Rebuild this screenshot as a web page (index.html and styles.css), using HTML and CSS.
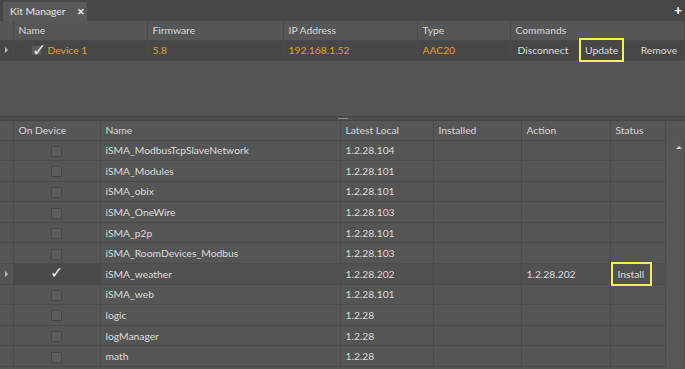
FILE: index.html
```html
<!DOCTYPE html>
<html lang="en">
<head>
  <meta charset="UTF-8" />
  <title>Kit Manager</title>
  <link rel="stylesheet" href="styles.css">
</head>
<body>

  <div class="tab-bar">
    <div class="tab">Kit Manager <span class="tab-close">✕</span></div>
    <span class="tab-add">+</span>
  </div>

  <div class="panel top-panel">
    <table class="grid devices">
      <colgroup>
        <col style="width:13px"><col style="width:134px"><col style="width:136px">
        <col style="width:134px"><col style="width:93px"><col>
      </colgroup>
      <thead>
        <tr><th></th><th>Name</th><th>Firmware</th><th>IP Address</th><th>Type</th><th>Commands</th></tr>
      </thead>
      <tbody>
        <tr class="selected">
          <td class="row-head"><span class="arrow"></span></td>
          <td class="orange"><span class="box checked">✓</span>Device 1</td>
          <td class="orange">5.8</td>
          <td class="orange">192.168.1.52</td>
          <td class="orange">AAC20</td>
          <td class="commands">
            <span>Disconnect</span>
            <span class="mark">Update</span>
            <span class="remove">Remove</span>
          </td>
        </tr>
      </tbody>
    </table>
  </div>

  <div class="splitter"><span class="grip"></span></div>

  <div class="panel bottom-panel">
    <table class="grid kits">
      <colgroup>
        <col style="width:13px"><col style="width:87px"><col style="width:240px">
        <col style="width:93px"><col style="width:88px"><col style="width:89px">
        <col style="width:55px"><col>
      </colgroup>
      <thead>
        <tr><th></th><th>On Device</th><th>Name</th><th>Latest Local</th><th>Installed</th><th>Action</th><th>Status</th><th class="scroll-col"></th></tr>
      </thead>
      <tbody>
        <tr><td class="row-head"></td><td class="center"><span class="box"></span></td><td>iSMA_ModbusTcpSlaveNetwork</td><td>1.2.28.104</td><td></td><td></td><td></td><td class="scroll-col" rowspan="11"><span class="scroll-up"></span></td></tr>
        <tr><td class="row-head"></td><td class="center"><span class="box"></span></td><td>iSMA_Modules</td><td>1.2.28.101</td><td></td><td></td><td></td></tr>
        <tr><td class="row-head"></td><td class="center"><span class="box"></span></td><td>iSMA_obix</td><td>1.2.28.101</td><td></td><td></td><td></td></tr>
        <tr><td class="row-head"></td><td class="center"><span class="box"></span></td><td>iSMA_OneWire</td><td>1.2.28.103</td><td></td><td></td><td></td></tr>
        <tr><td class="row-head"></td><td class="center"><span class="box"></span></td><td>iSMA_p2p</td><td>1.2.28.101</td><td></td><td></td><td></td></tr>
        <tr><td class="row-head"></td><td class="center"><span class="box"></span></td><td>iSMA_RoomDevices_Modbus</td><td>1.2.28.103</td><td></td><td></td><td></td></tr>
        <tr class="selected"><td class="row-head"><span class="arrow"></span></td><td class="center on"><span class="tick">✓</span></td><td>iSMA_weather</td><td>1.2.28.202</td><td></td><td>1.2.28.202</td><td class="status"><span class="mark">Install</span></td></tr>
        <tr><td class="row-head"></td><td class="center"><span class="box"></span></td><td>iSMA_web</td><td>1.2.28.101</td><td></td><td></td><td></td></tr>
        <tr><td class="row-head"></td><td class="center"><span class="box"></span></td><td>logic</td><td>1.2.28</td><td></td><td></td><td></td></tr>
        <tr><td class="row-head"></td><td class="center"><span class="box"></span></td><td>logManager</td><td>1.2.28</td><td></td><td></td><td></td></tr>
        <tr><td class="row-head"></td><td class="center"><span class="box"></span></td><td>math</td><td>1.2.28</td><td></td><td></td><td></td></tr>
      </tbody>
    </table>
  </div>

</body>
</html>
```

FILE: styles.css
```css
* { box-sizing: border-box; margin: 0; padding: 0; }

body {
  font-family: 'Lato', 'Open Sans', sans-serif;
  font-size: 10.3px;
  color: #dcdcdc;
  background: #555;
  width: 685px; height: 369px;
  overflow: hidden;
  display: flex;
  flex-direction: column;
}

.tab-bar {
  height: 21px;
  flex-shrink: 0;
  background: #474747;
  display: flex;
  align-items: flex-end;
  padding-left: 3px;
  position: relative;
}
.tab {
  height: 19px;
  width: 84px;
  background: #595959;
  color: #e4e4e4;
  white-space: nowrap;
  padding: 3px 0 0 7px;
}
.tab-close {
  font-weight: 700;
  font-size: 9px;
  margin-left: 9px;
  color: #f0f0f0;
}
.tab-add {
  position: absolute;
  right: 3px; top: 1px;
  font-weight: 700;
  font-size: 14px;
  color: #fff;
}

.top-panel { height: 95px; flex-shrink: 0; background: #555; }

.splitter {
  height: 5px;
  flex-shrink: 0;
  background: #4d4d4d;
  border-top: 1px solid #444;
  border-bottom: 1px solid #444;
  display: flex;
  justify-content: center;
  align-items: center;
}
.grip {
  width: 10px; height: 1px;
  background: #8a8a8a;
}

.bottom-panel { flex: 1; overflow: hidden; }

.grid {
  width: 100%;
  border-collapse: collapse;
  table-layout: fixed;
}
.grid th {
  height: 19px;
  background: #565656;
  font-weight: 400;
  text-align: left;
  padding: 0 5px;
  color: #d6d6d6;
  border-right: 1px solid #4a4a4a;
  border-bottom: 1px solid #4a4a4a;
  white-space: nowrap;
}
.grid td {
  height: 20.6px;
  padding: 0 5px;
  border-right: 1px solid #4b4b4b;
  border-bottom: 1px solid #4b4b4b;
  white-space: nowrap;
  overflow: hidden;
}
.devices td, .kits td.status { overflow: visible; }

.row-head { padding: 0 !important; }
.arrow {
  display: block;
  margin-left: 5px;
  width: 0; height: 0;
  border-top: 3px solid transparent;
  border-bottom: 3px solid transparent;
  border-left: 3px solid #bdbdbd;
}

.selected td { background: #474747; }
.kits .selected td { background: #515151; }
.kits .selected td.on { background: #4a4a4a; }
.kits .selected td.row-head { background: #555; }

.orange { color: #e0a02c; }

.box {
  display: inline-block;
  width: 11px; height: 11px;
  border: 1px solid #484848;
  background: #5c5c5c;
  vertical-align: middle;
}
.box.checked {
  margin: -2px 6px 0 12px;
  color: #e6e6e6;
  font-size: 17px;
  line-height: 8px;
  text-indent: 0;
}
.center { text-align: center; }
.tick { font-size: 16px; line-height: 10px; color: #e6e6e6; }

.commands { padding-left: 7px !important; }
.commands span { margin-right: 8px; }
.commands .remove { margin-right: 0; margin-left: 6px; }

.mark {
  display: inline-block;
  position: relative;
  z-index: 1;
  border: 2px solid #f4ec60;
  padding: 4px 4px 4px;
  line-height: 12px;
  margin: -4px 0;
}
.kits .mark { margin: -4px 0 -4px -5px; padding: 4px 6px 4px 5px; }

.scroll-col {
  background: #575757;
  border-bottom: none !important;
  vertical-align: top;
  padding: 0 !important;
}
.kits th.scroll-col { border-right: none; }
.scroll-up {
  display: block;
  margin: 6px 0 0 10px;
  width: 0; height: 0;
  border-left: 3px solid transparent;
  border-right: 3px solid transparent;
  border-bottom: 3px solid #cfcfcf;
}
```
